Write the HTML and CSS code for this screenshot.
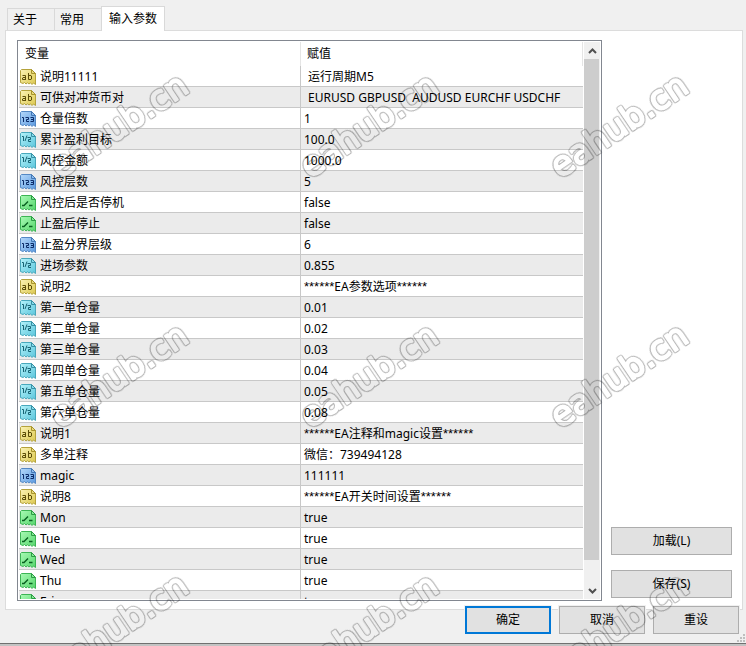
FILE: index.html
```html
<!DOCTYPE html>
<html lang="zh-CN">
<head>
    <meta charset="UTF-8">
    <meta name="viewport" content="width=device-width, initial-scale=1.0">
    <title>输入参数</title>
    <link rel="stylesheet" href="styles.css">
</head>
<body>
    <!-- 图标 -->
    <svg class="defs" width="0" height="0" aria-hidden="true">
        <defs>
            <linearGradient id="g-ab" x2="1" y2="1"><stop offset="0" stop-color="#fbf3b4"/><stop offset="1" stop-color="#dcc850"/></linearGradient>
            <linearGradient id="g-int" x2="1" y2="1"><stop offset="0" stop-color="#b4d8fa"/><stop offset="1" stop-color="#5c9ae0"/></linearGradient>
            <linearGradient id="g-dbl" x2="1" y2="1"><stop offset="0" stop-color="#b4f2fa"/><stop offset="1" stop-color="#5cc6dc"/></linearGradient>
            <linearGradient id="g-bool" x2="1" y2="1"><stop offset="0" stop-color="#a8fab4"/><stop offset="1" stop-color="#56d66c"/></linearGradient>
            <path id="sheet" d="M1.5 .5H11.5L15.5 4.5V15.5L13.5 14L12 15.5L10.5 13.8L9 15L7.5 13.8L6 15L4.5 13.5L3 14.5L.5 13.5V1.5Z"/>
            <path id="fold" d="M11.5 .5V4.5H15.5Z"/>
            <symbol id="i-ab" viewBox="0 0 16 16">
                <use href="#sheet" fill="url(#g-ab)" stroke="#b4a23c"/><use href="#fold" fill="#e8da7c" stroke="#a8942c"/>
                <path d="M2.5 6.5H5.5V11M5.5 8.5H3L2.5 9V10.5H5.5M8.5 4V10.5H11L11.5 10V7L11 6.5H8.5" fill="none" stroke="#5c4e08"/>
            </symbol>
            <symbol id="i-int" viewBox="0 0 16 16">
                <use href="#sheet" fill="url(#g-int)" stroke="#5488c4"/><use href="#fold" fill="#8cbcf0" stroke="#4478b4"/>
                <path d="M2 6.5H3.5V11M5.5 6.5H8.5V8.5H6.5V10.5H9M10.5 6.5H13.5V10.5H10.5M11 8.5H13.5" fill="none" stroke="#0c2c68"/>
            </symbol>
            <symbol id="i-dbl" viewBox="0 0 16 16">
                <use href="#sheet" fill="url(#g-dbl)" stroke="#48a8bc"/><use href="#fold" fill="#88dcec" stroke="#3890a4"/>
                <path d="M2 4.5H3.5V9M7 3.5L5 9M7.5 5.5H10.5V7.5H8.5V9.5H11" fill="none" stroke="#186474"/>
            </symbol>
            <symbol id="i-bool" viewBox="0 0 16 16">
                <use href="#sheet" fill="url(#g-bool)" stroke="#3cb454"/><use href="#fold" fill="#84ec94" stroke="#2c9c44"/>
                <path d="M2 10.5H4L8 6.5M9 10.5H12.5" fill="none" stroke="#086020" stroke-width="1.4"/>
            </symbol>
        </defs>
    </svg>

    <main class="dialog">
        <div class="tabs" role="tablist">
            <button class="tab" role="tab" type="button">关于</button>
            <button class="tab" role="tab" type="button">常用</button>
            <button class="tab active" role="tab" type="button" aria-selected="true">输入参数</button>
        </div>

        <div class="panel">
            <div class="list">
                <div class="list-view">
                    <table class="params">
                        <thead>
                            <tr><th>变量</th><th>赋值</th></tr>
                        </thead>
                        <tbody>
                            <tr><td><svg class="icon"><use href="#i-ab"/></svg>说明11111</td><td class="lead">运行周期M5</td></tr>
                            <tr><td><svg class="icon"><use href="#i-ab"/></svg>可供对冲货币对</td><td class="lead">EURUSD GBPUSD&nbsp; AUDUSD EURCHF USDCHF</td></tr>
                            <tr><td><svg class="icon"><use href="#i-int"/></svg>仓量倍数</td><td>1</td></tr>
                            <tr><td><svg class="icon"><use href="#i-dbl"/></svg>累计盈利目标</td><td>100.0</td></tr>
                            <tr><td><svg class="icon"><use href="#i-dbl"/></svg>风控金额</td><td>1000.0</td></tr>
                            <tr><td><svg class="icon"><use href="#i-int"/></svg>风控层数</td><td>5</td></tr>
                            <tr><td><svg class="icon"><use href="#i-bool"/></svg>风控后是否停机</td><td>false</td></tr>
                            <tr><td><svg class="icon"><use href="#i-bool"/></svg>止盈后停止</td><td>false</td></tr>
                            <tr><td><svg class="icon"><use href="#i-int"/></svg>止盈分界层级</td><td>6</td></tr>
                            <tr><td><svg class="icon"><use href="#i-dbl"/></svg>进场参数</td><td>0.855</td></tr>
                            <tr><td><svg class="icon"><use href="#i-ab"/></svg>说明2</td><td><span class="stars">******</span>EA参数选项<span class="stars">******</span></td></tr>
                            <tr><td><svg class="icon"><use href="#i-dbl"/></svg>第一单仓量</td><td>0.01</td></tr>
                            <tr><td><svg class="icon"><use href="#i-dbl"/></svg>第二单仓量</td><td>0.02</td></tr>
                            <tr><td><svg class="icon"><use href="#i-dbl"/></svg>第三单仓量</td><td>0.03</td></tr>
                            <tr><td><svg class="icon"><use href="#i-dbl"/></svg>第四单仓量</td><td>0.04</td></tr>
                            <tr><td><svg class="icon"><use href="#i-dbl"/></svg>第五单仓量</td><td>0.05</td></tr>
                            <tr><td><svg class="icon"><use href="#i-dbl"/></svg>第六单仓量</td><td>0.08</td></tr>
                            <tr><td><svg class="icon"><use href="#i-ab"/></svg>说明1</td><td><span class="stars">******</span>EA注释和magic设置<span class="stars">******</span></td></tr>
                            <tr><td><svg class="icon"><use href="#i-ab"/></svg>多单注释</td><td>微信：739494128</td></tr>
                            <tr><td><svg class="icon"><use href="#i-int"/></svg>magic</td><td>111111</td></tr>
                            <tr><td><svg class="icon"><use href="#i-ab"/></svg>说明8</td><td><span class="stars">******</span>EA开关时间设置<span class="stars">******</span></td></tr>
                            <tr><td><svg class="icon"><use href="#i-bool"/></svg>Mon</td><td>true</td></tr>
                            <tr><td><svg class="icon"><use href="#i-bool"/></svg>Tue</td><td>true</td></tr>
                            <tr><td><svg class="icon"><use href="#i-bool"/></svg>Wed</td><td>true</td></tr>
                            <tr><td><svg class="icon"><use href="#i-bool"/></svg>Thu</td><td>true</td></tr>
                            <tr><td><svg class="icon"><use href="#i-bool"/></svg>Fri</td><td>true</td></tr>
                        </tbody>
                    </table>
                </div>
                <div class="scrollbar">
                    <button class="arrow" type="button" aria-label="向上滚动"><svg width="9" height="6" viewBox="0 0 9 6"><path d="M1 5L4.5 1.5L8 5"/></svg></button>
                    <div class="thumb"></div>
                    <button class="arrow" type="button" aria-label="向下滚动"><svg width="9" height="6" viewBox="0 0 9 6"><path d="M1 1L4.5 4.5L8 1"/></svg></button>
                </div>
            </div>
            <div class="side">
                <button class="btn" type="button">加载(L)</button>
                <button class="btn" type="button">保存(S)</button>
            </div>
        </div>

        <div class="footer">
            <button class="btn primary" type="button">确定</button>
            <button class="btn" type="button">取消</button>
            <button class="btn" type="button">重设</button>
        </div>

        <svg class="grip" width="8" height="8" viewBox="0 0 8 8" aria-hidden="true">
            <path d="M6 0h2v2h-2zM3 3h2v2h-2zM6 3h2v2h-2zM0 6h2v2h-2zM3 6h2v2h-2zM6 6h2v2h-2z"/>
        </svg>
    </main>

    <!-- 水印：粗描边减去内部，得到圆角空心字 -->
    <svg class="watermark" aria-hidden="true">
        <mask id="hollow" maskUnits="userSpaceOnUse" x="0" y="0" width="100%" height="100%">
            <rect width="100%" height="100%" fill="#fff"/>
            <use href="#marks" class="inner"/>
        </mask>
        <g mask="url(#hollow)">
            <g class="outer">
                <g id="marks">
                    <text transform="translate(60 179) rotate(-34)">eahub.cn</text>
                    <text transform="translate(310 179) rotate(-34)">eahub.cn</text>
                    <text transform="translate(560 179) rotate(-34)">eahub.cn</text>
                    <text transform="translate(60 429) rotate(-34)">eahub.cn</text>
                    <text transform="translate(310 429) rotate(-34)">eahub.cn</text>
                    <text transform="translate(560 429) rotate(-34)">eahub.cn</text>
                    <text transform="translate(60 679) rotate(-34)">eahub.cn</text>
                    <text transform="translate(310 679) rotate(-34)">eahub.cn</text>
                    <text transform="translate(560 679) rotate(-34)">eahub.cn</text>
                </g>
            </g>
        </g>
    </svg>
</body>
</html>
```

FILE: styles.css
```css
* {
    box-sizing: border-box;
    margin: 0;
    padding: 0;
}

body {
    height: 100vh;
    padding-bottom: 2px;
    overflow: hidden;
    background: #c3c3c3;
    color: #000;
    font: 12px/16px "Noto Sans", "Noto Sans CJK SC", sans-serif;
}

button {
    font: inherit;
    color: inherit;
}

.defs {
    position: absolute;
}

/* 对话框 */
.dialog {
    position: relative;
    display: flex;
    flex-direction: column;
    height: 100%;
    padding: 6px 3px 0 5px;
    background: #f0f0f0;
    border-bottom: 1px solid #707070;
}

/* 选项卡 */
.tabs {
    display: flex;
    align-items: flex-end;
    height: 24px;
    padding-left: 2px;
}

.tab {
    height: 22px;
    padding: 0 17px 0 5px;
    background: #f0f0f0;
    border: 1px solid #d9d9d9;
    border-width: 1px 0 0 1px;
}

.tab.active {
    position: relative;
    z-index: 1;
    height: 25px;
    margin-bottom: -1px;
    padding: 0 7px;
    background: #fff;
    border-right-width: 1px;
}

.panel {
    display: flex;
    flex: 1;
    gap: 9px;
    min-height: 0;
    padding: 9px 10px 8px 11px;
    background: #fff;
    border: 1px solid #dcdcdc;
}

/* 参数列表 */
.list {
    display: flex;
    flex: 1;
    gap: 1px;
    min-width: 0;
    padding: 1px;
    border: 1px solid #828790;
}

.list-view {
    flex: 1;
    min-width: 0;
    overflow: hidden;
}

.params {
    width: 100%;
    table-layout: fixed;
    border-collapse: separate;
    border-spacing: 0;
}

.params th {
    height: 24px;
    padding: 0 6px;
    border-right: 1px solid #e5e5e5;
    font-weight: normal;
    text-align: left;
}

.params td {
    height: 21px;
    padding: 2px 3px 0 3px;
    border-bottom: 1px solid #c8c8c8;
    white-space: nowrap;
    line-height: 18px;
}

.params td:first-child {
    padding-left: 1px;
    border-right: 1px solid #c8c8c8;
}

.params td.lead {
    padding-left: 7px;
}

.params tr:nth-child(even) td {
    background: #ebebeb;
}

.stars {
    font-family: "Liberation Sans", sans-serif;
    font-size: 13px;
    line-height: 1;
}

.icon {
    width: 16px;
    height: 16px;
    margin-right: 4px;
    vertical-align: -4px;
}

/* 滚动条 */
.scrollbar {
    display: flex;
    flex-direction: column;
    width: 16px;
    background: #f0f0f0;
}

.arrow {
    display: flex;
    align-items: center;
    justify-content: center;
    height: 17px;
    border: 0;
    background: none;
}

.arrow:last-child {
    margin-top: auto;
}

.arrow path {
    fill: none;
    stroke: #505050;
    stroke-width: 2;
}

.thumb {
    height: 90%;
    margin-right: 1px;
    background: #cdcdcd;
}

/* 按钮 */
.btn {
    height: 28px;
    background: #e1e1e1;
    border: 1px solid #adadad;
}

.btn.primary {
    border: 2px solid #0078d7;
}

.side {
    display: flex;
    flex-direction: column;
    justify-content: flex-end;
    gap: 15px;
    width: 121px;
    padding-bottom: 3px;
}

.footer {
    display: flex;
    justify-content: flex-end;
    gap: 8px;
    margin-top: -4px;
    padding: 0 4px 9px 0;
}

.footer .btn {
    width: 86px;
    outline: 1px solid #f0f0f0;
}

.grip {
    position: absolute;
    right: 1px;
    bottom: 1px;
    fill: #bfbfbf;
}

/* 水印 */
.watermark {
    position: absolute;
    top: 0;
    left: 0;
    width: 100%;
    height: 100%;
    pointer-events: none;
    font: 34px "DejaVu Sans", sans-serif;
    stroke-linejoin: round;
    text-rendering: geometricPrecision;
}

.watermark .outer {
    fill: none;
    stroke: #000;
    stroke-width: 4px;
    opacity: 0.3;
}

.watermark .inner {
    fill: #000;
    stroke: #000;
    stroke-width: 2px;
}
```
